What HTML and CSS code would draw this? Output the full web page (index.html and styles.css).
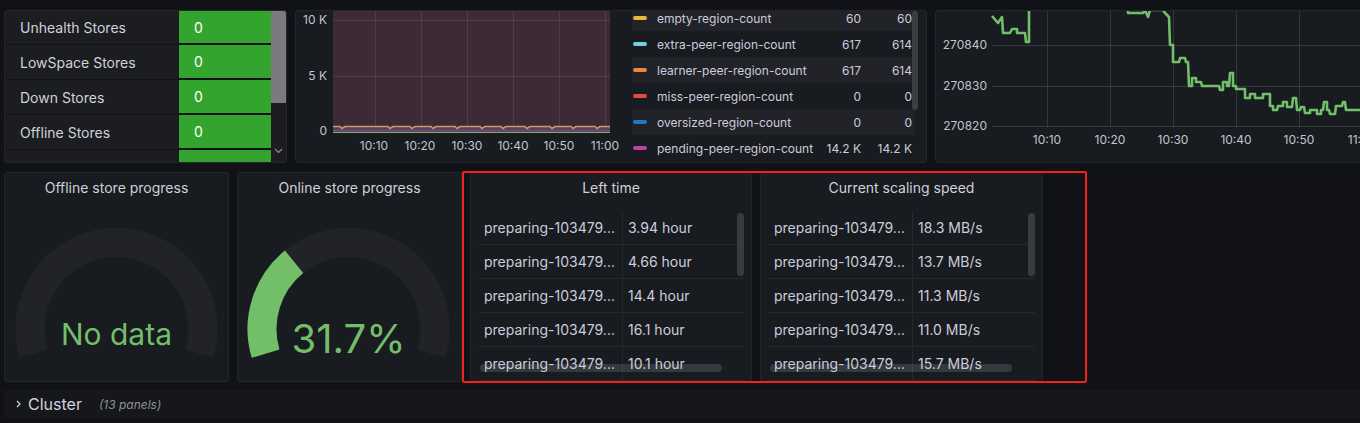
FILE: index.html
```html
<!DOCTYPE html>
<html>
<head>
<meta charset="utf-8">
<title>Dashboard</title>
<link rel="stylesheet" href="styles.css">
</head>
<body>
<div class="dash">
  <div class="row row-top">
    <section class="panel p-stores">
      <div class="stores">
        <div class="st-row"><div class="st-label">Unhealth Stores</div><div class="st-val">0</div></div>
        <div class="st-row"><div class="st-label">LowSpace Stores</div><div class="st-val">0</div></div>
        <div class="st-row"><div class="st-label">Down Stores</div><div class="st-val">0</div></div>
        <div class="st-row"><div class="st-label">Offline Stores</div><div class="st-val">0</div></div>
        <div class="st-row"><div class="st-label"></div><div class="st-val"></div></div>
      </div>
      <div class="st-scroll">
        <div class="st-thumb"></div>
        <svg class="st-chev" width="9" height="6" viewBox="0 0 9 6"><path d="M1 1 L4.5 4.5 L8 1" fill="none" stroke="#8a8b90" stroke-width="1.2"/></svg>
      </div>
    </section>

    <section class="panel p-regions">
      <svg class="reg-chart" width="331" height="151" viewBox="0 0 331 151">
        <rect x="37" y="0" width="277" height="122" fill="#3e2a37"/>
        <g stroke="rgba(255,255,255,0.09)" stroke-width="1">
          <line x1="37" y1="9.5" x2="314" y2="9.5"/>
          <line x1="37" y1="65.5" x2="314" y2="65.5"/>
          <line x1="79.5" y1="0" x2="79.5" y2="122"/>
          <line x1="125.5" y1="0" x2="125.5" y2="122"/>
          <line x1="171.5" y1="0" x2="171.5" y2="122"/>
          <line x1="217.5" y1="0" x2="217.5" y2="122"/>
          <line x1="263.5" y1="0" x2="263.5" y2="122"/>
          <line x1="309.5" y1="0" x2="309.5" y2="122"/>
        </g>
        <rect x="37" y="116" width="277" height="5" fill="#5a4159"/>
        <polyline fill="none" stroke="#c59a6c" stroke-width="1.6" points="37,115.5 44,115.5 46,117.5 49,115.5 92,115.5 94,117.5 97,115.5 114,115.5 116,117.5 119,115.5 135,115.5 137,117.5 140,115.5 159,115.5 161,117.5 164,115.5 184,115.5 186,117.5 189,115.5 205,115.5 207,117.5 210,115.5 229,115.5 231,117.5 234,115.5 254,115.5 256,117.5 259,115.5 275,115.5 277,117.5 280,115.5 299,115.5 301,117.5 304,115.5 314,115.5"/>
        <line x1="37" y1="119.5" x2="314" y2="119.5" stroke="#7a4a80" stroke-width="1"/>
        <line x1="37" y1="121.5" x2="314" y2="121.5" stroke="#7EB26D" stroke-width="1.2"/>
        <g class="axis">
          <text x="31" y="13.4" text-anchor="end">10 K</text>
          <text x="31" y="69.4" text-anchor="end">5 K</text>
          <text x="31" y="124.4" text-anchor="end">0</text>
          <text x="78" y="139.4" text-anchor="middle">10:10</text>
          <text x="124" y="139.4" text-anchor="middle">10:20</text>
          <text x="171" y="139.4" text-anchor="middle">10:30</text>
          <text x="217" y="139.4" text-anchor="middle">10:40</text>
          <text x="263" y="139.4" text-anchor="middle">10:50</text>
          <text x="309" y="139.4" text-anchor="middle">11:00</text>
        </g>
      </svg>
      <div class="legend">
        <div class="lg-row alt first"><span class="sw c-yellow"></span><span class="lg-name">empty-region-count</span><span class="lg-v">60</span><span class="lg-v">60</span></div>
        <div class="lg-row"><span class="sw c-cyan"></span><span class="lg-name">extra-peer-region-count</span><span class="lg-v">617</span><span class="lg-v">614</span></div>
        <div class="lg-row alt"><span class="sw c-orange"></span><span class="lg-name">learner-peer-region-count</span><span class="lg-v">617</span><span class="lg-v">614</span></div>
        <div class="lg-row"><span class="sw c-red"></span><span class="lg-name">miss-peer-region-count</span><span class="lg-v">0</span><span class="lg-v">0</span></div>
        <div class="lg-row alt"><span class="sw c-blue"></span><span class="lg-name">oversized-region-count</span><span class="lg-v">0</span><span class="lg-v">0</span></div>
        <div class="lg-row"><span class="sw c-purple"></span><span class="lg-name">pending-peer-region-count</span><span class="lg-v">14.2 K</span><span class="lg-v">14.2 K</span></div>
        <div class="lg-thumb"></div>
      </div>
    </section>

    <section class="panel p-size">
      <svg class="size-chart" width="432" height="151" viewBox="0 0 432 151">
        <g transform="translate(-936,-11)">
          <g stroke="rgba(255,255,255,0.12)" stroke-width="1">
            <line x1="992" y1="45.5" x2="1370" y2="45.5"/>
            <line x1="992" y1="86.5" x2="1370" y2="86.5"/>
            <line x1="992" y1="126.5" x2="1370" y2="126.5"/>
            <line x1="1047.5" y1="0" x2="1047.5" y2="127"/>
            <line x1="1110.5" y1="0" x2="1110.5" y2="127"/>
            <line x1="1173.5" y1="0" x2="1173.5" y2="127"/>
            <line x1="1236.5" y1="0" x2="1236.5" y2="127"/>
            <line x1="1299.5" y1="0" x2="1299.5" y2="127"/>
            <line x1="1362.5" y1="0" x2="1362.5" y2="127"/>
          </g>
          <path fill="none" stroke="#73BF69" stroke-width="2.6" stroke-linejoin="round" d="M992,16 L998,23 L1002,17 L1003,33 L1010,33 L1012,29 L1017,29 L1017,33 L1025,33 L1026,42 L1029,42 L1029,0 L1127,0 L1128,13 L1143,13 L1145,10 L1148,17 L1150,10 L1163,10 L1165,13 L1169,17 L1170,45 L1173,45 L1173,62 L1179,62 L1180,58 L1185,58 L1186,62 L1188,62 L1189,86 L1192,86 L1192,78 L1196,78 L1196,82 L1201,82 L1202,86 L1219,86 L1220,90 L1223,90 L1223,82 L1227,82 L1227,86 L1229,86 L1230,73 L1233,73 L1233,86 L1236,86 L1236,89 L1245,89 L1245,98 L1250,98 L1250,94 L1255,94 L1255,98 L1263,98 L1263,94 L1270,94 L1270,106 L1273,106 L1273,110 L1277,110 L1278,106 L1283,106 L1283,102 L1287,102 L1287,107 L1292,107 L1293,98 L1296,98 L1297,110 L1300,110 L1301,107 L1304,107 L1305,113 L1310,113 L1310,110 L1317,110 L1317,114 L1321,114 L1321,110 L1323,110 L1324,102 L1327,102 L1327,110 L1329,110 L1330,114 L1335,114 L1336,106 L1342,106 L1343,102 L1345,102 L1346,110 L1372,110"/>
          <g class="axis">
            <text x="987" y="49.4" text-anchor="end">270840</text>
            <text x="987" y="90.4" text-anchor="end">270830</text>
            <text x="987" y="130.4" text-anchor="end">270820</text>
            <text x="1047" y="144" text-anchor="middle">10:10</text>
            <text x="1110" y="144" text-anchor="middle">10:20</text>
            <text x="1173" y="144" text-anchor="middle">10:30</text>
            <text x="1236" y="144" text-anchor="middle">10:40</text>
            <text x="1299" y="144" text-anchor="middle">10:50</text>
            <text x="1362" y="144" text-anchor="middle">11:00</text>
          </g>
        </g>
      </svg>
    </section>
  </div>

  <div class="row row-mid">
    <section class="panel p-gauge">
      <div class="ptitle">Offline store progress</div>
      <svg class="gauge" width="223" height="176" viewBox="0 0 223 176">
        <path d="M28.6 148.7 A86.5 86.5 0 1 1 194.4 148.7" fill="none" stroke="#212329" stroke-width="29"/>
        <text class="g-val g-nodata" x="111.5" y="140" text-anchor="middle">No data</text>
      </svg>
    </section>
    <section class="panel p-gauge">
      <div class="ptitle">Online store progress</div>
      <svg class="gauge" width="223" height="176" viewBox="0 0 223 176">
        <path d="M27.6 148.7 A86.5 86.5 0 1 1 193.4 148.7" fill="none" stroke="#212329" stroke-width="29"/>
        <path d="M27.6 148.7 A86.5 86.5 0 0 1 56.1 56.8" fill="none" stroke="#73BF69" stroke-width="29"/>
        <text class="g-val g-pct" x="110.5" y="147.5" text-anchor="middle">31.7%</text>
      </svg>
    </section>
    <section class="panel p-table p-left">
      <div class="ptitle">Left time</div>
      <div class="tbl">
        <div class="tr"><div class="td1">preparing-103479...</div><div class="td2">3.94 hour</div></div>
        <div class="tr"><div class="td1">preparing-103479...</div><div class="td2">4.66 hour</div></div>
        <div class="tr"><div class="td1">preparing-103479...</div><div class="td2">14.4 hour</div></div>
        <div class="tr"><div class="td1">preparing-103479...</div><div class="td2">16.1 hour</div></div>
        <div class="tr"><div class="td1">preparing-103479...</div><div class="td2">10.1 hour</div></div>
        <div class="vbar"></div>
        <div class="hbar"></div>
      </div>
    </section>
    <section class="panel p-table p-speed">
      <div class="ptitle">Current scaling speed</div>
      <div class="tbl">
        <div class="tr"><div class="td1">preparing-103479...</div><div class="td2">18.3 MB/s</div></div>
        <div class="tr"><div class="td1">preparing-103479...</div><div class="td2">13.7 MB/s</div></div>
        <div class="tr"><div class="td1">preparing-103479...</div><div class="td2">11.3 MB/s</div></div>
        <div class="tr"><div class="td1">preparing-103479...</div><div class="td2">11.0 MB/s</div></div>
        <div class="tr"><div class="td1">preparing-103479...</div><div class="td2">15.7 MB/s</div></div>
        <div class="vbar"></div>
        <div class="hbar"></div>
      </div>
    </section>
  </div>

  <div class="cluster">
    <svg class="cl-chev" width="5" height="8" viewBox="0 0 5 8"><path d="M1 1 L4 4 L1 7" fill="none" stroke="#ccccdc" stroke-width="1.3"/></svg>
    <span class="cl-name">Cluster</span>
    <span class="cl-count">(13 panels)</span>
  </div>

  <div class="hl"></div>
</div>
</body>
</html>
```

FILE: styles.css
```css
* { box-sizing: border-box; }
html, body { margin: 0; padding: 0; }
body {
  width: 1360px;
  height: 423px;
  overflow: hidden;
  background: #111217;
  font-family: Inter, "Noto Sans", "DejaVu Sans", sans-serif;
  font-size: 14px;
  color: #ccccdc;
}
.dash {
  position: relative;
  padding: 10px 0 0 4px;
}
.row { display: flex; gap: 8px; }
.row-top { height: 153px; }
.row-mid { height: 210px; margin-top: 9px; }

.panel {
  flex: 0 0 auto;
  background: #181b1f;
  border: 1px solid #24262c;
  border-radius: 3px;
  overflow: hidden;
}

/* Stores table */
.p-stores { width: 283px; display: flex; }
.stores { width: 266px; background: #1b1d21; }
.st-row { display: flex; height: 35px; }
.st-row:first-child { height: 34px; }
.st-label {
  width: 174px;
  padding-left: 15px;
  display: flex;
  align-items: center;
  border-bottom: 1px solid #121317;
  color: #d0d1da;
  font-size: 14px;
}
.st-val {
  width: 92px;
  padding-left: 15px;
  display: flex;
  align-items: center;
  background: #33a52e;
  color: #ffffff;
  font-size: 14px;
  border-bottom: 2px solid #121317;
}
.st-scroll { width: 15px; position: relative; background: #1b1d21; }
.st-thumb { height: 92px; background: #7b7b7e; }
.st-chev { position: absolute; left: 3px; bottom: 8px; }

/* Regions panel */
.p-regions { width: 632px; display: flex; }
.reg-chart { display: block; flex: 0 0 331px; }
.axis text {
  font-family: Inter, "Noto Sans", sans-serif;
  font-size: 12px;
  fill: #c3c4cc;
}
.legend {
  position: relative;
  margin-left: 5px;
  width: 286px;
  overflow: hidden;
  font-size: 12px;
}
.lg-row {
  display: grid;
  grid-template-columns: 14px 1fr auto 51px;
  align-items: center;
  height: 26px;
  width: 283px;
  padding: 0 3px 0 1px;
  white-space: nowrap;
}
.lg-row.first { margin-top: -6px; }
.lg-row.alt { background: #212328; }
.sw { height: 4px; border-radius: 2px; }
.c-yellow { background: #EAB839; }
.c-cyan { background: #6ED0E0; }
.c-orange { background: #EF843C; }
.c-red { background: #E24D42; }
.c-blue { background: #1F78C1; }
.c-purple { background: #BA43A9; }
.lg-name { margin-left: 10px; }
.lg-v { text-align: right; }
.lg-thumb {
  position: absolute;
  left: 280px;
  top: 0;
  width: 6px;
  height: 99px;
  border-radius: 3px;
  background: #3b3d43;
}

/* Store size chart */
.p-size { width: 433px; }
.size-chart { display: block; }

/* Gauges */
.p-gauge { width: 225px; display: flex; flex-direction: column; }
.ptitle {
  flex: 0 0 32px;
  line-height: 30px;
  text-align: center;
  font-weight: 400;
  font-size: 14px;
  color: #d0d1da;
  white-space: nowrap;
}
.gauge { display: block; }
.g-val { font-family: Inter, "Noto Sans", sans-serif; fill: #73BF69; }
.g-nodata { font-size: 30px; }
.g-pct { font-size: 40px; }

/* Tables */
.p-table { display: flex; flex-direction: column; }
.p-left { width: 282px; }
.p-speed { width: 283px; }
.tbl {
  position: relative;
  flex: 1;
  margin: 6px 7px 0;
  overflow: hidden;
}
.tr {
  display: flex;
  height: 34px;
  border-bottom: 1px solid #26282d;
  white-space: nowrap;
}
.td1 {
  width: 145px;
  padding-left: 6px;
  border-right: 1px solid #26282d;
  display: flex;
  align-items: center;
}
.td2 {
  padding-left: 5px;
  display: flex;
  align-items: center;
}
.vbar {
  position: absolute;
  right: 0;
  top: 2px;
  width: 7px;
  height: 63px;
  border-radius: 4px;
  background: #393b41;
}
.hbar {
  position: absolute;
  left: 2px;
  bottom: 9px;
  width: 242px;
  height: 8px;
  border-radius: 4px;
  background: rgba(204, 204, 220, 0.17);
}

/* Collapsed row */
.cluster {
  margin-top: 8px;
  height: 28px;
  display: flex;
  align-items: center;
  background: #15171b;
  padding-left: 12px;
}
.cl-chev { display: block; }
.cl-name { margin-left: 7px; font-size: 16px; color: #d0d1da; }
.cl-count {
  margin-left: 17px;
  font-size: 12px;
  font-style: italic;
  color: #8e8f97;
}

/* Annotation highlight */
.hl {
  position: absolute;
  left: 462px;
  top: 171px;
  width: 625px;
  height: 212px;
  border: 2px solid #f0221b;
  border-radius: 2px;
  pointer-events: none;
}
```
